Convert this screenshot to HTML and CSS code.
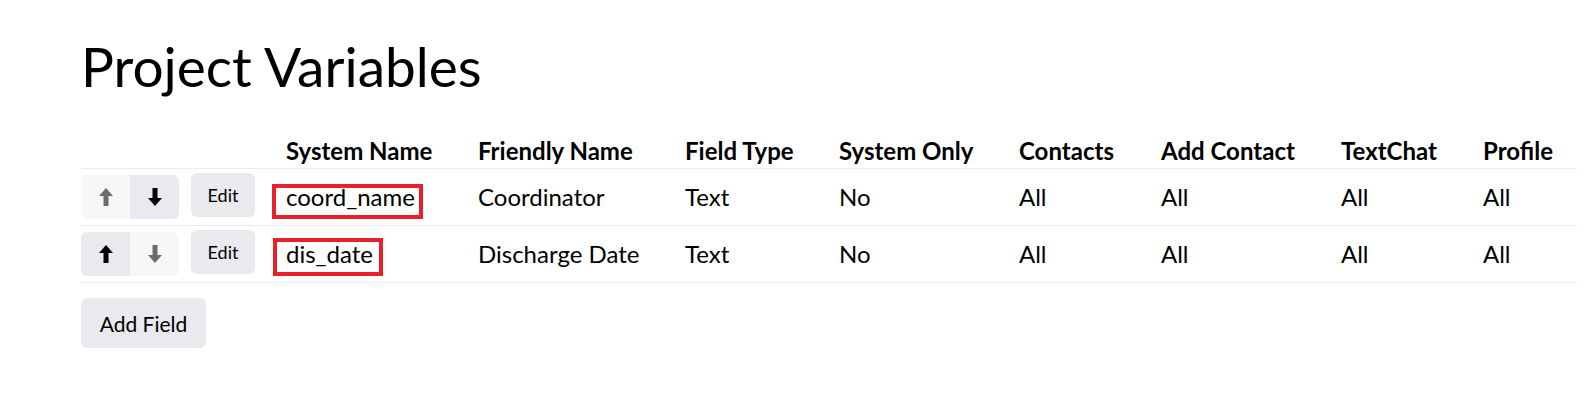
FILE: index.html
```html
<!DOCTYPE html>
<html lang="en">
<head>
    <meta charset="UTF-8">
    <meta name="viewport" content="width=device-width, initial-scale=1.0">
    <title>Project Variables</title>
    <link rel="stylesheet" href="styles.css">
</head>
<body>

    <div class="container">
        <h1>Project Variables</h1>

        <table class="vars">
            <colgroup>
                <col class="c-move">
                <col class="c-edit">
                <col class="c-sys">
                <col class="c-friendly">
                <col class="c-type">
                <col class="c-only">
                <col class="c-contacts">
                <col class="c-add">
                <col class="c-chat">
                <col class="c-profile">
            </colgroup>
            <thead>
                <tr>
                    <th></th>
                    <th></th>
                    <th>System Name</th>
                    <th>Friendly Name</th>
                    <th>Field Type</th>
                    <th>System Only</th>
                    <th>Contacts</th>
                    <th>Add Contact</th>
                    <th>TextChat</th>
                    <th>Profile</th>
                </tr>
            </thead>
            <tbody>
                <tr>
                    <td>
                        <div class="move-group">
                            <button class="move muted" disabled>
                                <svg width="14" height="18" viewBox="0 0 14 18"><path d="M7 0 L14 8 H9.5 V18 H4.5 V8 H0 Z"/></svg>
                            </button>
                            <button class="move">
                                <svg width="14" height="18" viewBox="0 0 14 18"><path d="M7 18 L14 10 H9.5 V0 H4.5 V10 H0 Z"/></svg>
                            </button>
                        </div>
                    </td>
                    <td><button class="edit">Edit</button></td>
                    <td><span class="mark mark-1">coord_name</span></td>
                    <td>Coordinator</td>
                    <td>Text</td>
                    <td>No</td>
                    <td>All</td>
                    <td>All</td>
                    <td>All</td>
                    <td>All</td>
                </tr>
                <tr>
                    <td>
                        <div class="move-group">
                            <button class="move">
                                <svg width="14" height="18" viewBox="0 0 14 18"><path d="M7 0 L14 8 H9.5 V18 H4.5 V8 H0 Z"/></svg>
                            </button>
                            <button class="move muted" disabled>
                                <svg width="14" height="18" viewBox="0 0 14 18"><path d="M7 18 L14 10 H9.5 V0 H4.5 V10 H0 Z"/></svg>
                            </button>
                        </div>
                    </td>
                    <td><button class="edit">Edit</button></td>
                    <td><span class="mark mark-2">dis_date</span></td>
                    <td>Discharge Date</td>
                    <td>Text</td>
                    <td>No</td>
                    <td>All</td>
                    <td>All</td>
                    <td>All</td>
                    <td>All</td>
                </tr>
            </tbody>
        </table>

        <button class="add-field">Add Field</button>
    </div>

</body>
</html>
```

FILE: styles.css
```css
* {
    margin: 0;
    padding: 0;
    box-sizing: border-box;
    font-family: 'Lato', sans-serif;
}
body {
    background: white;
    color: black;
}
.container {
    padding: 33px 0 0 81px;
}
h1 {
    font-size: 55px;
    font-weight: normal;
    line-height: 66px;
    margin-bottom: 37px;
}
.vars {
    width: 1496px;
    table-layout: fixed;
    border-collapse: collapse;
    font-size: 24px;
    line-height: 30px;
}
.c-move { width: 110px; }
.c-edit { width: 95px; }
.c-sys { width: 192px; }
.c-friendly { width: 207px; }
.c-type { width: 154px; }
.c-only { width: 180px; }
.c-contacts { width: 142px; }
.c-add { width: 180px; }
.c-chat { width: 142px; }
.c-profile { width: 94px; }
th {
    text-align: left;
    font-weight: bold;
    padding: 0 0 2px;
    border-bottom: 1px solid #ececec;
}
td {
    text-align: left;
    vertical-align: middle;
    height: 57px;
    padding: 6px 0;
    border-bottom: 1px solid #ececec;
}
button {
    font-family: 'Lato', sans-serif;
    border: none;
    color: black;
    cursor: pointer;
}
.move-group {
    display: flex;
    width: 98px;
    height: 44px;
    border-radius: 6px;
    overflow: hidden;
}
.move {
    flex: 1;
    display: flex;
    align-items: center;
    justify-content: center;
    background: #e9e9ee;
}
.move svg {
    fill: black;
}
.move.muted {
    background: #f7f7f8;
    cursor: default;
}
.move.muted svg {
    fill: #6c6c6c;
}
.edit {
    display: block;
    width: 64px;
    height: 44px;
    margin-top: -4px;
    background: #e9e9ee;
    border-radius: 6px;
    font-size: 18px;
}
/* red annotation boxes round the system names */
.mark {
    position: relative;
}
.mark::after {
    content: '';
    position: absolute;
    border: 4px solid #e8202a;
}
.mark-1::after {
    top: 2px;
    bottom: -8px;
    left: -14px;
    right: -8px;
}
.mark-2::after {
    top: -1px;
    bottom: -8px;
    left: -13px;
    right: -10px;
}
.add-field {
    margin-top: 15px;
    width: 125px;
    height: 50px;
    background: #e9e9ee;
    border-radius: 6px;
    font-size: 21px;
}
```
